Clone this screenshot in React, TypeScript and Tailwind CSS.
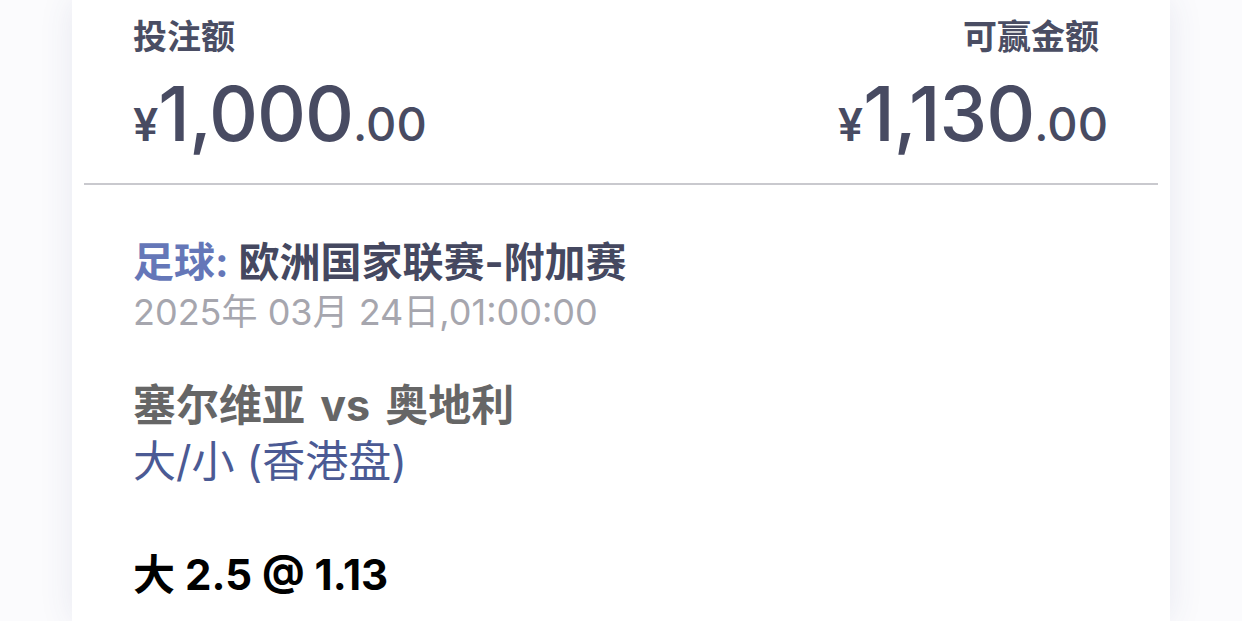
export default function App() {
    return (
        <div className="min-h-screen w-full bg-[#fbfbfd] font-['Inter','Noto_Sans_CJK_SC',sans-serif]">
            <div className="mx-[72px] h-[621px] overflow-hidden bg-white shadow-[0_0_32px_rgba(60,70,130,0.10)]">
                {/* Amounts */}
                <div className="flex justify-between pl-[61px] pr-[62px] pt-[17px]">
                    <div className="flex flex-col">
                        <span className="text-[34px] font-bold leading-[40px] text-[#4a4d63]">投注额</span>
                        <Amount whole="1,000" />
                    </div>
                    <div className="flex flex-col items-end">
                        <span className="text-[34px] font-bold leading-[40px] text-[#4a4d63] mr-[9px]">可赢金额</span>
                        <Amount whole="1,130" />
                    </div>
                </div>

                <div className="mx-3 mt-[18px] h-[2px] bg-[#c9c9ce]" />

                {/* Event details */}
                <div className="px-[61px] pt-[52px]">
                    <div className="text-[41px] font-bold leading-[50px] text-[#454860]">
                        <span className="text-[#6577b8]">足球: </span>欧洲国家联赛-附加赛
                    </div>
                    <div className="text-[36px] leading-[50px] text-[#a6a6ae]">2025年 03月 24日,01:00:00</div>

                    <div className="mt-[40px] text-[43px] font-bold leading-[56px] text-[#666666] [word-spacing:5px]">塞尔维亚 vs 奥地利</div>
                    <div className="text-[43px] leading-[56px] text-[#4b5a94]">大/小 (香港盘)</div>

                    <div className="mt-[58px] text-[42px] font-bold leading-[56px] text-black">大 2.5 @ 1.13</div>
                </div>
            </div>
        </div>
    );
}

function Amount({ whole }: { whole: string }) {
    return (
        <div className="mt-[16px] flex items-baseline text-[#484b62] leading-[80px]">
            <span className="text-[45px] font-semibold">¥</span>
            <span className="text-[76px] font-medium tracking-[-1px]">{whole}</span>
            <span className="text-[47px] font-medium">.00</span>
        </div>
    );
}
